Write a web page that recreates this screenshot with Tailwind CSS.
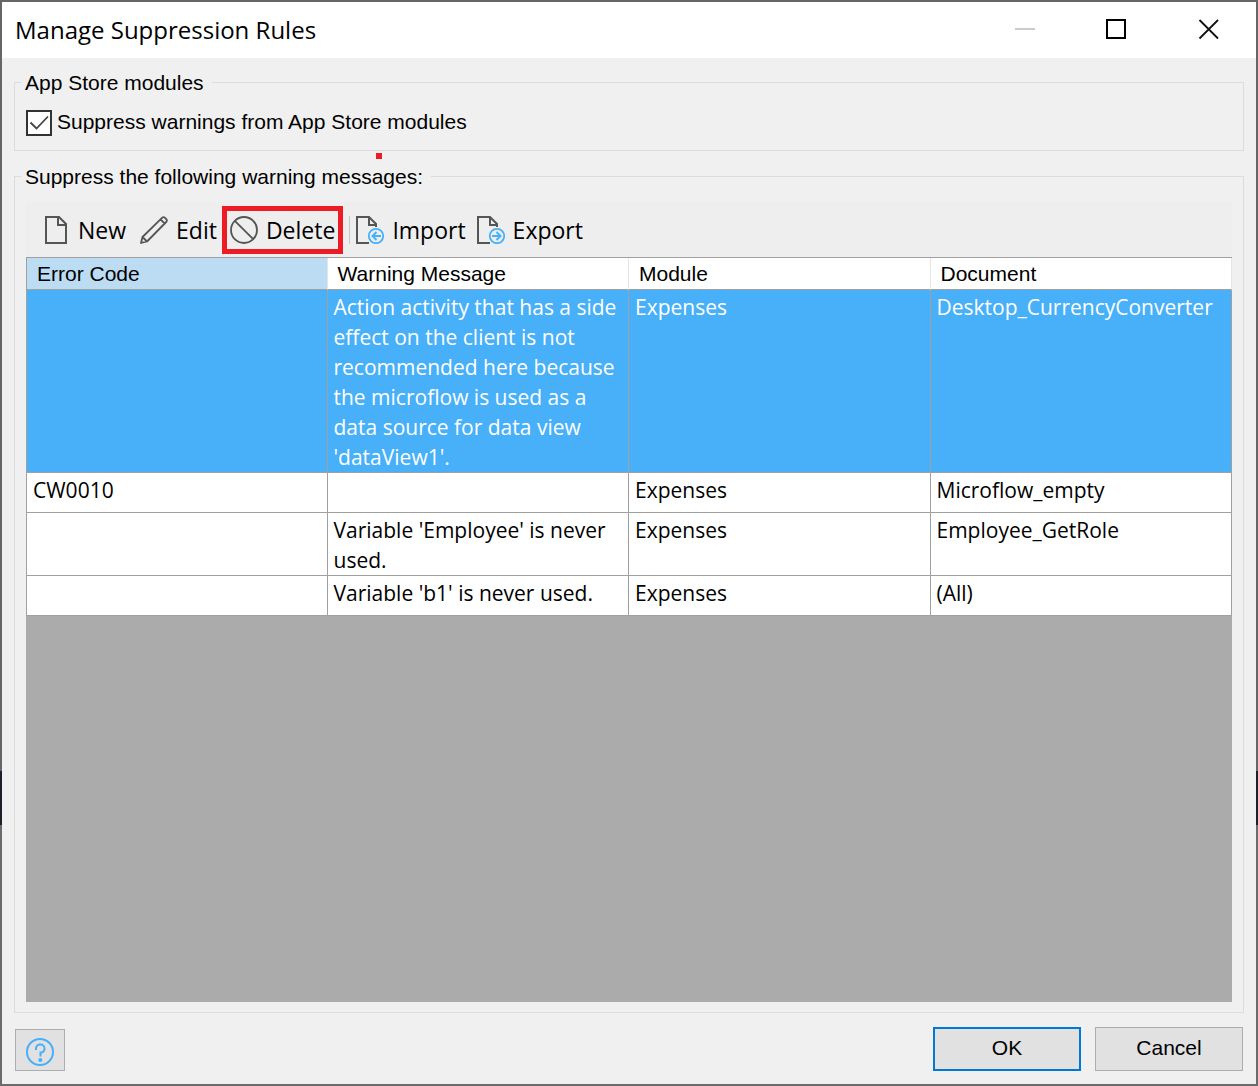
<!DOCTYPE html>
<html lang="en">
<head>
<meta charset="utf-8">
<title>Manage Suppression Rules</title>
<script src="https://cdn.jsdelivr.net/npm/@tailwindcss/browser@4"></script>
</head>
<body class="bg-[linear-gradient(to_bottom,#666_71%,#20202a_71%,#20202a_76%,#6b6b6b_76%)] font-['Liberation_Sans',sans-serif] text-black">
<div class="min-h-screen p-[2px] flex flex-col">
<main class="relative flex-1 flex flex-col bg-[#f0f0f0]">

  <header class="h-14 bg-white flex items-center justify-between pl-[13px] pr-9">
    <h1 class="font-['Open_Sans',sans-serif] text-[24px] leading-8">Manage Suppression Rules</h1>
    <div class="flex items-center gap-[70px] pb-[2px]">
      <button type="button" aria-label="Minimize" disabled><svg class="block" width="22" height="22" viewBox="0 0 22 22"><path d="M1 11h20" stroke="#ccc" stroke-width="2"/></svg></button>
      <button type="button" aria-label="Maximize"><svg class="block" width="22" height="22" viewBox="0 0 22 22"><rect x="1" y="2" width="18" height="18" fill="none" stroke="#000" stroke-width="2"/></svg></button>
      <button type="button" aria-label="Close"><svg class="block" width="22" height="22" viewBox="0 0 22 22"><path d="M1.500 2l18.500 18.500M20 2L1.500 20.500" stroke="#111" stroke-width="1.800"/></svg></button>
    </div>
  </header>

  <div class="flex-1 flex flex-col gap-[14px] px-3 pt-[13px]">
    <fieldset class="min-w-0 border border-[#dcdcdc] px-[6px] pb-[14px]">
      <legend class="pl-1 pr-2 text-[21px] leading-[23px]">App Store modules</legend>
      <div class="flex items-center gap-[5px] pl-[5px] pt-4">
        <span class="grid size-[26px] shrink-0">
          <input id="appstore" type="checkbox" checked class="col-start-1 row-start-1 size-[26px] appearance-none border-2 border-[#333] bg-white">
          <svg class="col-start-1 row-start-1 pointer-events-none" width="26" height="26" viewBox="0 0 26 26"><path d="M4.500 12.500l6 6L22 6.500" fill="none" stroke="#444" stroke-width="1.800"/></svg>
        </span>
        <label for="appstore" class="text-[21px] leading-6 pb-[2px]">Suppress warnings from App Store modules</label>
      </div>
    </fieldset>

    <fieldset class="min-w-0 flex-1 border border-[#dcdcdc] px-[6px] pb-[10px]">
      <legend class="pl-1 pr-2 text-[21px] leading-[23px]">Suppress the following warning messages:</legend>
      <div class="pt-[14px] px-[5px]">
        <div class="h-[55px] flex items-center bg-[#eee] pl-4 font-['Open_Sans',sans-serif] text-[23px] leading-8" role="toolbar" aria-label="Rules">
          <button type="button" class="flex items-center gap-2 pr-[14px]">
            <svg width="28" height="28" viewBox="0 0 28 28" fill="none" stroke="#555" stroke-width="2"><path d="M4 1h13l7 7v19H4zM16 1v8h8"/></svg>New</button>
          <button type="button" class="flex items-center gap-2 pr-[5px]">
            <svg width="28" height="28" viewBox="0 0 28 28" fill="none" stroke="#555" stroke-width="1.800" stroke-linejoin="round"><path d="M1 27l1.500-6L22 1.800a2.200 2.200 0 0 1 3 0l1.200 1.200a2.200 2.200 0 0 1 0 3L7 25.500zM2.500 21L7 25.500M20.500 3.300l4.200 4.200"/></svg>Edit</button>
          <button type="button" class="h-12 flex items-center gap-2 border-5 border-[#ed1c24] px-[3px]">
            <svg width="28" height="28" viewBox="0 0 28 28" fill="none" stroke="#555" stroke-width="1.800"><circle cx="14" cy="14" r="13"/><path d="M4.800 4.800l18.400 18.400"/></svg>Delete</button>
          <span class="mx-[6px] h-7 w-px bg-[#c8c8c8]"></span>
          <button type="button" class="flex items-center gap-2 pr-[11px]">
            <svg width="28" height="28" viewBox="0 0 28 28" fill="none"><path d="M13 27H1V1h12l7 7v3M13 1v8h7" stroke="#555" stroke-width="2"/><circle cx="20" cy="20" r="7.200" stroke="#47b0f9" stroke-width="1.800"/><path d="M25 20h-8M20.500 16L16.500 20l4 4" stroke="#47b0f9" stroke-width="2"/></svg>Import</button>
          <button type="button" class="flex items-center gap-2">
            <svg width="28" height="28" viewBox="0 0 28 28" fill="none"><path d="M13 27H1V1h12l7 7v3M13 1v8h7" stroke="#555" stroke-width="2"/><circle cx="20" cy="20" r="7.200" stroke="#47b0f9" stroke-width="1.800"/><path d="M15 20h8M19.500 16l4 4-4 4" stroke="#47b0f9" stroke-width="2"/></svg>Export</button>
        </div>

        <div class="min-h-[calc(100vh-341px)] border-t border-[#a0a0a0] bg-[#ababab]">
          <table class="w-full table-fixed border-separate border-spacing-0 text-left font-['Open_Sans',sans-serif] text-[21px] leading-[30px]">
            <thead class="font-['Liberation_Sans',sans-serif] text-[21px]">
              <tr class="h-8 bg-white [&>th]:border-b [&>th]:border-b-[#a0a0a0] [&>th]:border-r [&>th]:border-r-[#e5e5e5] [&>th]:font-normal [&>th]:py-0 [&>th]:pl-[10px]">
                <th scope="col" class="border-l border-l-[#a0a0a0] bg-[#bcdcf4]">Error Code</th>
                <th scope="col">Warning Message</th>
                <th scope="col">Module</th>
                <th scope="col">Document</th>
              </tr>
            </thead>
            <tbody class="align-top [&_td]:border-b [&_td]:border-r [&_td]:border-[#a0a0a0] [&_td]:pt-[2px] [&_td]:pl-[6px] [&_td:first-child]:border-l">
              <tr class="h-[183px] bg-[#47b0f9] text-white">
                <td></td>
                <td>Action activity that has a side effect on the client is not recommended here because the microflow is used as a data source for data view 'dataView1'.</td>
                <td>Expenses</td>
                <td>Desktop_CurrencyConverter</td>
              </tr>
              <tr class="h-10 bg-white"><td>CW0010</td><td></td><td>Expenses</td><td>Microflow_empty</td></tr>
              <tr class="h-[63px] bg-white"><td></td><td>Variable 'Employee' is never used.</td><td>Expenses</td><td>Employee_GetRole</td></tr>
              <tr class="h-10 bg-white"><td></td><td>Variable 'b1' is never used.</td><td>Expenses</td><td>(All)</td></tr>
            </tbody>
          </table>
        </div>
      </div>
    </fieldset>
  </div>

  <footer class="flex items-end gap-[14px] px-[13px] pt-[14px] pb-[13px] text-[21px] leading-6">
    <button type="button" aria-label="Help" class="mr-auto h-[42px] w-[50px] grid place-items-center border border-[#adadad] bg-[#e1e1e1] pt-1">
      <svg width="28" height="28" viewBox="0 0 28 28" fill="none" stroke="#47b0f9" stroke-width="2"><circle cx="14" cy="14" r="13"/><path d="M10 12V10.500a4 4 0 0 1 4-4h.500a4 4 0 0 1 4 4v.500a3.500 3.500 0 0 1-3.500 3.500h-.500v4"/><circle cx="14.300" cy="22" r="2" fill="#47b0f9" stroke="none"/></svg>
    </button>
    <button type="button" class="h-11 w-[148px] border-2 border-[#0078d7] bg-[#e1e1e1] pb-[2px]">OK</button>
    <button type="button" class="h-11 w-[148px] border border-[#adadad] bg-[#e1e1e1] pb-[2px]">Cancel</button>
  </footer>

  <span class="absolute left-[374px] top-[151px] size-[6px] bg-[#ed1c24]"></span>
</main>
</div>
</body>
</html>
